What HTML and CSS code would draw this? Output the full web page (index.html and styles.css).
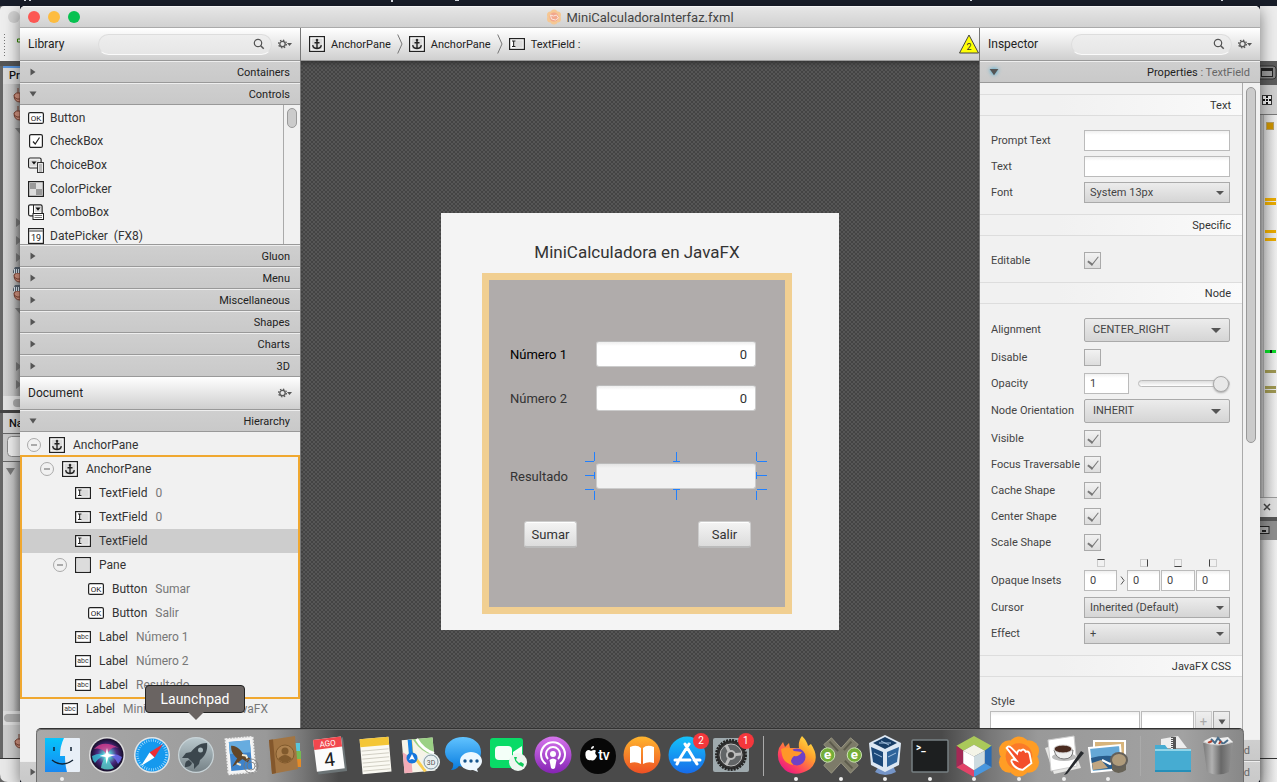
FILE: index.html
```html
<!DOCTYPE html>
<html lang="es">
<head>
<meta charset="utf-8">
<title>MiniCalculadoraInterfaz.fxml</title>
<link rel="stylesheet" href="styles.css">
</head>
<body>
<svg class="defs" aria-hidden="true">
  <symbol id="i-anchor" viewBox="0 0 16 16"><rect x=".6" y=".6" width="14.8" height="14.8" fill="#fff" stroke="#222" stroke-width="1.2"/><rect x="2.5" y="2.5" width="11" height="11" fill="#dcdcdc"/><circle cx="8" cy="4" r="1.3" fill="#333"/><path d="M8 4v8.5M5.5 6.8h5M3.7 9.2c.3 2.2 2 3.3 4.3 3.3s4-1.1 4.3-3.3" fill="none" stroke="#222" stroke-width="1.4"/></symbol>
  <symbol id="i-field" viewBox="0 0 16 16"><rect x=".6" y="2.6" width="14.8" height="10.8" fill="#fff" stroke="#222" stroke-width="1.2"/><rect x="6" y="4.3" width="7.7" height="7.4" fill="#dcdcdc"/><path d="M3 5h3.4M3 10.5h3.4M4.7 5v5.5" stroke="#222" stroke-width="1.2"/></symbol>
  <symbol id="i-pane" viewBox="0 0 16 16"><rect x=".6" y=".6" width="14.8" height="14.8" fill="#fff" stroke="#222" stroke-width="1.2"/><rect x="2" y="2" width="12" height="12" fill="#dcdcdc"/></symbol>
  <symbol id="i-ok" viewBox="0 0 16 16"><rect x=".6" y="2.6" width="14.8" height="10.8" rx="1.5" fill="#fff" stroke="#222" stroke-width="1.2"/><text x="8" y="10.8" text-anchor="middle" font-size="8" fill="#222">OK</text></symbol>
  <symbol id="i-abc" viewBox="0 0 16 16"><rect x=".6" y="2.6" width="14.8" height="10.8" fill="#fff" stroke="#222" stroke-width="1.2"/><text x="8" y="10.3" text-anchor="middle" font-size="7" fill="#333">abc</text></symbol>
  <symbol id="i-check" viewBox="0 0 16 16"><rect x="1.6" y="1.6" width="12.8" height="12.8" rx="1.5" fill="#fff" stroke="#222" stroke-width="1.2"/><path d="M5 8.5l2.2 2.5L11.5 4.5" fill="none" stroke="#222" stroke-width="1.2"/></symbol>
  <symbol id="i-choice" viewBox="0 0 16 16"><rect x=".6" y="1" width="12.5" height="10" rx="1.5" fill="#fff" stroke="#222" stroke-width="1.2"/><rect x="2" y="2.5" width="9.5" height="7" fill="#ddd"/><path d="M3.5 4.5h5L6 7.5z" fill="#111"/><rect x="9.6" y="5.6" width="5.8" height="10" fill="#fff" stroke="#222"/><path d="M11 8h3M11 10h3M11 12h3M11 14h3" stroke="#555" stroke-width=".8"/></symbol>
  <symbol id="i-color" viewBox="0 0 16 16"><rect x=".6" y=".6" width="14.8" height="14.8" fill="#ddd" stroke="#222" stroke-width="1.2"/><path d="M2 2h6v6H2zM8 8h6v6H8z" fill="#999"/></symbol>
  <symbol id="i-combo" viewBox="0 0 16 16"><rect x=".6" y=".8" width="13.5" height="11" rx="1.5" fill="#fff" stroke="#222" stroke-width="1.2"/><path d="M5.5 1v10" stroke="#222"/><rect x="7" y="2" width="6" height="6" fill="#ddd"/><path d="M7.5 3.5h5L10 6.8z" fill="#111"/><rect x="5" y="9.5" width="10.5" height="6" fill="#fff" stroke="#222"/><path d="M6.500 11.5h7.5M6.5 13.5h7.5" stroke="#555" stroke-width=".8"/></symbol>
  <symbol id="i-date" viewBox="0 0 16 16"><rect x=".6" y=".6" width="14.8" height="14.8" fill="#fff" stroke="#222" stroke-width="1.2"/><path d="M1 3h14" stroke="#999" stroke-width="2"/><text x="8" y="12.5" text-anchor="middle" font-size="9" fill="#222">19</text></symbol>
  <symbol id="i-gear" viewBox="0 0 14 10"><circle cx="4.500" cy="5" r="2.7" fill="none" stroke="#555" stroke-width="1.3"/><circle cx="4.500" cy="5" r="3.9" fill="none" stroke="#555" stroke-width="1.2" stroke-dasharray="1.5 1.56"/><path d="M9 4h5l-2.5 3z" fill="#555"/></symbol>
  <symbol id="i-search" viewBox="0 0 12 12"><circle cx="5" cy="5" r="3.7" fill="none" stroke="#555" stroke-width="1.2"/><path d="M7.7 7.7l3 3" stroke="#555" stroke-width="1.5"/></symbol>
  <symbol id="i-chev" viewBox="0 0 6 20"><path d="M.7.500L5 10 .7 19.500" fill="none" stroke="#777"/></symbol>
  <symbol id="i-right" viewBox="0 0 8 8"><path d="M1.500.500L6.500 4 1.500 7.500z" fill="#555"/></symbol>
  <symbol id="i-down" viewBox="0 0 8 8"><path d="M.500 1.500h7L4 6.500z" fill="#555"/></symbol>
</svg>

<div class="desktop">
  <svg class="menubar" viewBox="0 0 1277 6" preserveAspectRatio="none" aria-hidden="true"><path d="M24 0h2v1h-2zM29 0h2v1h-2zM391 0h2v2h-2zM455 0h4v1h-4zM970 0h2v1h-2zM1221 0h2v1h-2z" fill="#dfe3ea"/></svg>

  <svg class="behind behind-left" width="20" height="776" viewBox="0 6 20 776" aria-hidden="true">
    <defs><linearGradient id="lg"><stop offset="0" stop-color="#d3d3d3"/><stop offset=".6" stop-color="#c5c5c5"/><stop offset="1" stop-color="#999"/></linearGradient></defs>
    <rect y="6" width="20" height="776" fill="#666"/>
    <path d="M0 61V10q0-4 4-4h16v55z" fill="#eee"/><circle cx="14" cy="17" r="6" fill="#d2d2d2"/>
    <path d="M4.500 34v22" stroke="#777" stroke-dasharray="1 2"/><path d="M20 39h-2.500v3H20" fill="none" stroke="#318600"/>
    <rect y="61" width="20" height="5" fill="#555"/><rect x="3" y="66" width="17" height="2" fill="#5b96dd"/>
    <rect x="3" y="68" width="17" height="328" fill="url(#lg)"/>
    <rect x="3" y="68" width="17" height="16" fill="#d9d9d9"/>
    <text x="9" y="79" font-size="11" font-weight="500" fill="#111">Pr</text>
    <g id="cups"><path d="M14 95q0 7 6 7v-9q-4-1-6 2z" fill="#d39480" stroke="#784031"/><path d="M14 97q3 3 6 2M18 88v5" stroke="#784031" fill="none"/></g>
    <use href="#cups" y="18"/><use href="#cups" y="180"/><use href="#cups" y="198"/>
    <path d="M13 271l2-4h5v6h-7zM13 289l2-4h5v6h-7z" fill="#56616d"/><path d="M14 271h6M14 289h6" stroke="#dce7f2" stroke-dasharray="1 1" stroke-width="4"/>
    <path d="M15 128h5v6zM15 308h5v6zM16 218l4 3v3l-4 3zM16 236l4 3v3l-4 3zM16 253l4 3v3l-4 3zM16 362l4 3v3l-4 3zM16 380l4 3v3l-4 3z" fill="#777"/>
    <rect x="3" y="396" width="17" height="14" fill="#e3e3e3"/><rect x="13" y="399" width="12" height="8" rx="4" fill="#aaa"/>
    <rect y="410" width="20" height="3" fill="#444"/><rect x="3" y="413" width="17" height="20" fill="#d1d1d1"/>
    <text x="9" y="427" font-size="11" font-weight="500" fill="#111">Na</text>
    <rect x="3" y="433" width="17" height="28" fill="#c9c9c9"/><path d="M3 433.500h17M3 461.500h17" stroke="#666"/><rect x="7.500" y="436.500" width="20" height="20" rx="4" fill="#eee" stroke="#888"/>
    <rect x="3" y="462" width="17" height="252" fill="url(#lg)"/><path d="M6 468h9l-4.500 7z" fill="#777"/>
    <rect x="3" y="711" width="17" height="14" fill="#ddd"/><rect x="4" y="714" width="20" height="8" rx="4" fill="#aaa"/>
    <rect x="3" y="725" width="17" height="33" fill="#ccc"/><use href="#cups" x="1" y="646"/><path d="M0 758.500h20" stroke="#333"/>
    <path d="M0 759h20v23H8q-8 0-8-8z" fill="#e8e8e8"/>
  </svg>
  <svg class="behind behind-right" width="17" height="776" viewBox="0 6 17 776" aria-hidden="true">
    <defs><linearGradient id="rg"><stop offset="0" stop-color="#aaa"/><stop offset=".25" stop-color="#cfcfcf"/><stop offset="1" stop-color="#efefef"/></linearGradient></defs>
    <rect y="6" width="17" height="776" fill="url(#rg)"/><rect y="6" width="17" height="55" fill="#ededed"/>
    <rect y="61" width="17" height="24" fill="#5b5b5b"/><rect x="-3" y="66" width="19" height="13" rx="3" fill="#858585" stroke="#333"/><rect x="1.500" y="68.500" width="11" height="8" fill="#999" stroke="#222"/><path d="M1 70h12" stroke="#222" stroke-width="2"/>
    <rect y="85" width="17" height="30" fill="#cecece"/><path d="M0 114.500h17" stroke="#777"/><rect x="2.500" y="95.500" width="9" height="9" fill="#eee" stroke="#333"/><path d="M3 100h8M7 96v8" stroke="#111" stroke-width="2" stroke-dasharray="2 1"/>
    <rect x="3" y="115" width="1" height="382" fill="#aaa"/><rect x="6.500" y="122.500" width="7" height="7" fill="#c99100" stroke="#b49b60"/>
    <path d="M5 198h11v3H5zM5 202h11v3H5zM5 230h11v3H5zM5 238h11v3H5z" fill="#e6a800"/><path d="M5 350h11v3H5z" fill="#0e1d12"/><path d="M5 350h5v3H5zM12 350h4v3h-4z" fill="#0bd727"/><path d="M5 370h11v3H5zM5 386h11v3H5zM5 390h11v3H5z" fill="#9b9450"/>
    <rect y="497" width="17" height="20" fill="#ddd"/><path d="M0 497.500h17" stroke="#999"/><path d="M4 504l6 6M10 504l-6 6" stroke="#444" stroke-width="1.500"/>
    <rect y="517" width="17" height="4" fill="#555"/><rect y="521" width="17" height="19" fill="#8d8d8d"/><rect x="-2" y="526.500" width="11" height="7" fill="#aaa" stroke="#222"/><path d="M2 531h4" stroke="#222" stroke-width="2"/>
    <path d="M0 758.500h17" stroke="#333"/>
  </svg>

  <main class="window">
    <header class="titlebar">
      <div class="lights"><button class="light red" aria-label="Cerrar"></button><button class="light amber" aria-label="Minimizar"></button><button class="light green" aria-label="Ampliar"></button></div>
      <h1 class="title"><svg width="16" height="16" viewBox="0 0 16 16" aria-hidden="true"><g fill="#f6c793"><circle cx="8" cy="4" r="3.500"/><circle cx="8" cy="12" r="3.500"/><circle cx="4.500" cy="6" r="3.500"/><circle cx="11.500" cy="6" r="3.500"/><circle cx="4.500" cy="10" r="3.500"/><circle cx="11.500" cy="10" r="3.500"/></g><circle cx="8" cy="8" r="4.500" fill="#f2a78c"/><path d="M4.500 6l3 1 3-1 2 3-3 2-4-1z" fill="none" stroke="#fbe6dd"/></svg>MiniCalculadoraInterfaz.fxml</h1>
    </header>
    <div class="columns">
      <section class="side">
        <div class="head"><h2>Library</h2><label class="search"><input type="text" aria-label="Buscar en Library"><svg width="12" height="12"><use href="#i-search"/></svg></label><button class="gear" aria-label="Opciones"><svg width="14" height="10"><use href="#i-gear"/></svg></button></div>
        <button class="bar"><svg width="8" height="8"><use href="#i-right"/></svg><span>Containers</span></button>
        <button class="bar"><svg width="8" height="8"><use href="#i-down"/></svg><span>Controls</span></button>
        <div class="library">
          <ul class="controls">
            <li><svg width="16" height="16"><use href="#i-ok"/></svg>Button</li>
            <li><svg width="16" height="16"><use href="#i-check"/></svg>CheckBox</li>
            <li><svg width="16" height="16"><use href="#i-choice"/></svg>ChoiceBox</li>
            <li><svg width="16" height="16"><use href="#i-color"/></svg>ColorPicker</li>
            <li><svg width="16" height="16"><use href="#i-combo"/></svg>ComboBox</li>
            <li><svg width="16" height="16"><use href="#i-date"/></svg>DatePicker&nbsp; (FX8)</li>
          </ul>
          <div class="scroll"><div class="thumb short"></div></div>
        </div>
        <button class="bar"><svg width="8" height="8"><use href="#i-right"/></svg><span>Gluon</span></button>
        <button class="bar"><svg width="8" height="8"><use href="#i-right"/></svg><span>Menu</span></button>
        <button class="bar"><svg width="8" height="8"><use href="#i-right"/></svg><span>Miscellaneous</span></button>
        <button class="bar"><svg width="8" height="8"><use href="#i-right"/></svg><span>Shapes</span></button>
        <button class="bar"><svg width="8" height="8"><use href="#i-right"/></svg><span>Charts</span></button>
        <button class="bar"><svg width="8" height="8"><use href="#i-right"/></svg><span>3D</span></button>
        <div class="head"><h2>Document</h2><button class="gear" aria-label="Opciones"><svg width="14" height="10"><use href="#i-gear"/></svg></button></div>
        <button class="bar"><svg width="8" height="8"><use href="#i-down"/></svg><span>Hierarchy</span></button>
        <div class="tree">
          <div class="node l0"><button class="fold" aria-label="Contraer"></button><svg width="16" height="16"><use href="#i-anchor"/></svg>AnchorPane</div>
          <div class="group">
            <div class="node l1"><button class="fold" aria-label="Contraer"></button><svg width="16" height="16"><use href="#i-anchor"/></svg>AnchorPane</div>
            <div class="node l2"><svg width="16" height="16"><use href="#i-field"/></svg>TextField<i>0</i></div>
            <div class="node l2"><svg width="16" height="16"><use href="#i-field"/></svg>TextField<i>0</i></div>
            <div class="node l2 selected"><svg width="16" height="16"><use href="#i-field"/></svg>TextField</div>
            <div class="node l2 open"><button class="fold" aria-label="Contraer"></button><svg width="16" height="16"><use href="#i-pane"/></svg>Pane</div>
            <div class="node l3"><svg width="16" height="16"><use href="#i-ok"/></svg>Button<i>Sumar</i></div>
            <div class="node l3"><svg width="16" height="16"><use href="#i-ok"/></svg>Button<i>Salir</i></div>
            <div class="node l2"><svg width="16" height="16"><use href="#i-abc"/></svg>Label<i>Número 1</i></div>
            <div class="node l2"><svg width="16" height="16"><use href="#i-abc"/></svg>Label<i>Número 2</i></div>
            <div class="node l2"><svg width="16" height="16"><use href="#i-abc"/></svg>Label<i>Resultado</i></div>
          </div>
          <div class="node leaf"><svg width="16" height="16"><use href="#i-abc"/></svg>Label<i>MiniCalculadora en JavaFX</i></div>
        </div>
        <button class="bar" aria-label="Controller"><svg width="8" height="8"><use href="#i-right"/></svg></button>
      </section>

      <section class="center">
        <nav class="head crumbs">
          <svg width="16" height="16"><use href="#i-anchor"/></svg><span>AnchorPane</span><svg width="6" height="20"><use href="#i-chev"/></svg>
          <svg width="16" height="16"><use href="#i-anchor"/></svg><span>AnchorPane</span><svg width="6" height="20"><use href="#i-chev"/></svg>
          <svg width="16" height="16"><use href="#i-field"/></svg><span>TextField :</span>
          <svg class="warn" width="20" height="20" viewBox="0 0 20 20"><path d="M10 1L19.500 19H.5z" fill="#ffff05" stroke="#444"/><text x="10" y="16" text-anchor="middle" font-size="9" fill="#333">2</text></svg>
        </nav>
        <div class="canvas">
          <div class="artboard">
            <p class="app-title">MiniCalculadora en JavaFX</p>
            <form class="pane">
              <div class="row"><label class="dark" for="n1">Número 1</label><input id="n1" type="text" value="0"></div>
              <div class="row"><label for="n2">Número 2</label><input id="n2" type="text" value="0"></div>
              <div class="row result"><label for="res">Resultado</label><div class="picked"><input id="res" type="text"><svg width="182" height="48" viewBox="0 0 182 48" aria-hidden="true"><path d="M9.500 0v9M0 9.500h9M9.500 48v-9M0 37.500h9M171.500 0v9M172 9.500h10M171.500 48v-9M172 37.500h10M91.500 0v9M88 9.500h7M91.500 48V38M88 37.500h7M0 23.500h9M9.500 20v7M171.500 20v7M172 23.500h10" fill="none" stroke="#2080ff" shape-rendering="crispEdges"/></svg></div></div>
              <div class="actions"><button type="button">Sumar</button><button type="button">Salir</button></div>
            </form>
          </div>
        </div>
      </section>

      <section class="side inspector">
        <div class="head"><h2>Inspector</h2><label class="search"><input type="text" aria-label="Buscar en Inspector"><svg width="12" height="12"><use href="#i-search"/></svg></label><button class="gear" aria-label="Opciones"><svg width="14" height="10"><use href="#i-gear"/></svg></button></div>
        <button class="bar focus"><svg width="10" height="10"><use href="#i-down"/></svg><span>Properties <em>: TextField</em></span></button>
        <div class="props">
          <div class="list">
            <h3>Text</h3>
            <div class="fields">
              <label for="prompt">Prompt Text</label><input class="box" id="prompt" type="text">
              <label for="text">Text</label><input class="box" id="text" type="text">
              <label for="font">Font</label><div class="pick small"><select id="font"><option>System 13px</option></select></div>
            </div>
            <h3>Specific</h3>
            <div class="fields"><label for="edit">Editable</label><input id="edit" type="checkbox" checked></div>
            <h3>Node</h3>
            <div class="fields">
              <label class="tall" for="align">Alignment</label><div class="pick"><select id="align"><option>CENTER_RIGHT</option></select></div>
              <label for="dis">Disable</label><input id="dis" type="checkbox">
              <label for="opa">Opacity</label><div class="opacity"><input class="box" id="opa" type="text" value="1"><input type="range" aria-label="Opacity" value="100"></div>
              <label class="tall" for="orient">Node Orientation</label><div class="pick"><select id="orient"><option>INHERIT</option></select></div>
              <label for="vis">Visible</label><input id="vis" type="checkbox" checked>
              <label for="foc">Focus Traversable</label><input id="foc" type="checkbox" checked>
              <label for="cache">Cache Shape</label><input id="cache" type="checkbox" checked>
              <label for="cen">Center Shape</label><input id="cen" type="checkbox" checked>
              <label for="sca">Scale Shape</label><input id="sca" type="checkbox" checked>
              <label class="insets-label" for="in1">Opaque Insets</label>
              <div class="insets">
                <span class="edge t"></span><span></span><span class="edge r"></span><span class="edge b"></span><span class="edge l"></span>
                <input class="box" id="in1" type="text" value="0"><svg width="5" height="9" viewBox="0 0 5 9"><path d="M1 .5l3 4-3 4" fill="none" stroke="#555"/></svg><input class="box" type="text" value="0" aria-label="Right"><input class="box" type="text" value="0" aria-label="Bottom"><input class="box" type="text" value="0" aria-label="Left">
              </div>
              <label for="cur">Cursor</label><div class="pick small"><select id="cur"><option>Inherited (Default)</option></select></div>
              <label for="eff">Effect</label><div class="pick small"><select id="eff"><option>+</option></select></div>
            </div>
            <h3>JavaFX CSS</h3>
            <div class="fields style"><label for="sty">Style</label></div>
            <div class="style-row"><input class="box" id="sty" type="text"><input class="box" type="text" aria-label="Valor"><button class="mini" disabled>+</button><button class="mini" aria-label="Más"><svg width="8" height="8"><use href="#i-down"/></svg></button></div>
          </div>
          <div class="scroll"><div class="thumb long"></div></div>
        </div>
        <button class="bar"><svg width="8" height="8"><use href="#i-right"/></svg><span>Layout <em>: TextField</em></span></button>
        <button class="bar"><svg width="8" height="8"><use href="#i-right"/></svg><span>Code <em>: TextField</em></span></button>
      </section>
    </div>
  </main>

  <div class="dock">
    <a class="app run" aria-label="Finder"><svg viewBox="0 0 38 38"><defs><linearGradient id="g1" x2="0" y2="1"><stop stop-color="#06c4fb"/><stop offset="1" stop-color="#1888f2"/></linearGradient></defs><rect x="2" y="2" width="35" height="34" rx="1" fill="#e8eff7"/><path d="M2 2h19q-4 8-4 18h5q0 9 2 16H2z" fill="url(#g1)"/><path d="M11 11v4M28 11v4" stroke="#123" stroke-width="1.500"/><path d="M9 24q10 8 21 0" fill="none" stroke="#123" stroke-width="1.500"/></svg></a>
    <a class="app" aria-label="Siri"><svg viewBox="0 0 38 38"><defs><radialGradient id="g2"><stop stop-color="#fff"/><stop offset=".25" stop-color="#5bc"/><stop offset=".6" stop-color="#4a2a80"/><stop offset="1" stop-color="#150d28"/></radialGradient></defs><circle cx="19" cy="19" r="18" fill="#ddd"/><circle cx="19" cy="19" r="16.500" fill="url(#g2)"/><path d="M6 13Q15 3 31 12q-8-3-12 7-5-8-13-6z" fill="#e0408f" opacity=".75"/><path d="M4 20q8-4 15-1-7 1-12 8-3-3-3-7z" fill="#35cfe0" opacity=".75"/><path d="M34 21q-7-5-15-2 8 1 11 9 3-3 4-7z" fill="#6a6cf0" opacity=".85"/><path d="M13 32q1-8 6-13 2 7 7 13-6 3-13 0z" fill="#59e3d6" opacity=".75"/><path d="M19 12l1.500 6 7 1-7 2-2 7-1-7-6-1 6-2z" fill="#fff"/></svg></a>
    <a class="app" aria-label="Safari"><svg viewBox="0 0 38 38"><circle cx="19" cy="19" r="18" fill="#e4e6e8"/><circle cx="19" cy="19" r="16.500" fill="#1599ee"/><circle cx="19" cy="19" r="14.500" fill="none" stroke="#bce5ff" stroke-width="2.500" stroke-dasharray=".7 1.600"/><path d="M30 8L16.500 16.500l5 5z" fill="#ee2e35"/><path d="M8 30l8.500-13.500 5 5z" fill="#fff"/></svg></a>
    <a class="app" aria-label="Launchpad"><svg viewBox="0 0 38 38"><defs><linearGradient id="g3" x2="0" y2="1"><stop stop-color="#b9c8cd"/><stop offset="1" stop-color="#768287"/></linearGradient></defs><circle cx="19" cy="19" r="18" fill="#c9d4d8"/><circle cx="19" cy="19" r="16.800" fill="url(#g3)"/><path d="M30 7c-8 0-13 5-16 9l-5 1-4 5 6 0 6 6v5l5-5 1-4c5-4 8-9 7-17zM12 24c-4 1-4 4-4 7 4 0 6-1 7-4z" fill="#3b464d"/><circle cx="23.500" cy="14" r="2.500" fill="#a8b7bc"/></svg></a>
    <a class="app" aria-label="Mail"><svg viewBox="0 0 38 38"><g transform="rotate(-5 19 19)"><rect x="5" y="2" width="27" height="35" fill="#f6f6f6" stroke="#eee" stroke-width="2" stroke-dasharray="2 1"/><rect x="8" y="5" width="21" height="29" fill="#3d83cb"/><path d="M8 5h21v12H8z" fill="#67acdf"/><path d="M10 9c6 0 10 6 12 11l6 3-3 4-5-4-7 5-4 2 6-8c-3-3-6-7-5-13z" fill="#624628"/><path d="M14 27l4 2M20 19l4 1 1 3" stroke="#f3ead2" stroke-width="2" fill="none"/></g><circle cx="29" cy="30" r="7" fill="none" stroke="#777" opacity=".8"/><circle cx="29" cy="30" r="4" fill="none" stroke="#777" opacity=".8"/></svg></a>
    <a class="app" aria-label="Contactos"><svg viewBox="0 0 38 38"><path d="M29 7h5v8h-5z" fill="#5ac5db"/><path d="M29 15h6v8h-6z" fill="#76b953"/><path d="M29 23h6v8h-6z" fill="#e48b28"/><path d="M3 4L29 0l3 33L6 38z" fill="#a27543"/><path d="M3 4l4-.500L10 37l-4 1z" fill="#83572c"/><circle cx="19" cy="18" r="9" fill="#ae824f" stroke="#815a2d"/><circle cx="19" cy="15" r="3.500" fill="#815a2d"/><path d="M12 23q7-8 14 0-7 7-14 0z" fill="#815a2d"/></svg></a>
    <a class="app" aria-label="Calendario"><svg viewBox="0 0 38 38"><g transform="rotate(-7 19 19)"><path d="M5 3h29v34H5z" fill="#6c7476"/><rect x="4" y="2" width="28" height="32" fill="#fcfcfc"/><rect x="4" y="2" width="28" height="10" fill="#f2474d"/><text x="18" y="10" text-anchor="middle" font-size="8" fill="#fff">AGO</text><text x="18" y="30" text-anchor="middle" font-size="19" fill="#222">4</text></g></svg></a>
    <a class="app" aria-label="Notas"><svg viewBox="0 0 38 38"><g transform="rotate(-5 19 19)"><rect x="5" y="2" width="29" height="35" fill="#faf9f2"/><rect x="5" y="2" width="29" height="8" fill="#f4c635"/><path d="M6 14h27M6 18h27M6 22h27M6 26h27M6 30h27M6 34h27" stroke="#c8c5b9" stroke-width=".8"/></g></svg></a>
    <a class="app" aria-label="Mapas"><svg viewBox="0 0 38 38"><g transform="rotate(-5 17 19)"><rect x="3" y="3" width="31" height="33" fill="#f6f4e8"/><path d="M3 15l8 6v15H3z" fill="#f3acb7"/><path d="M14 3h20v18Q22 18 14 3z" fill="#9bd185"/><path d="M18 3q5 11 16 16" fill="none" stroke="#fff" stroke-width="3"/><path d="M12 3v14l12 19" fill="none" stroke="#f9ce52" stroke-width="3"/><path d="M11 3v17" stroke="#1686e8" stroke-width="4"/></g><circle cx="12" cy="22" r="5.500" fill="#1676dc"/><path d="M12 18l3 6-3-1-3 1z" fill="#fff"/><circle cx="31" cy="26" r="9" fill="#eaf0f1"/><circle cx="31" cy="26" r="7" fill="none" stroke="#7c929c"/><text x="31" y="29" text-anchor="middle" font-size="7" fill="#555">3D</text></svg></a>
    <a class="app" aria-label="Mensajes"><svg viewBox="0 0 38 38"><defs><linearGradient id="g4" x2="0" y2="1"><stop stop-color="#61c3ff"/><stop offset="1" stop-color="#087cdf"/></linearGradient></defs><path d="M18 1c10 0 18 6 18 15s-8 15-18 15l-4-1q-3 4-8 4 3-3 2-7-8-4-8-11C0 7 8 1 18 1z" fill="url(#g4)"/><path d="M26 16c6 0 11 4 11 9 0 3-2 6-5 8l1 3-5-2c-7 1-13-3-13-9 0-5 5-9 11-9z" fill="#eef8ff"/><circle cx="20" cy="25" r="1.700" fill="#16558e"/><circle cx="26" cy="25" r="1.700" fill="#16558e"/><circle cx="32" cy="25" r="1.700" fill="#16558e"/></svg></a>
    <a class="app" aria-label="FaceTime"><svg viewBox="0 0 38 38"><rect x="1" y="2" width="33" height="30" rx="3" fill="#09db67"/><rect x="6" y="10" width="17" height="14" rx="4" fill="#f4fff8"/><path d="M24 16l9-6v14l-9-5z" fill="#f4fff8"/><circle cx="29" cy="26" r="9" fill="#eef7f0"/><path d="M25 21q1 7 9 10l1-3-3-2-2 1-3-3 1-3z" fill="#0ecb5a"/></svg></a>
    <a class="app" aria-label="Podcasts"><svg viewBox="0 0 38 38"><defs><linearGradient id="g5" x2="0" y2="1"><stop stop-color="#d675ed"/><stop offset="1" stop-color="#8524b4"/></linearGradient></defs><circle cx="19" cy="19" r="18.500" fill="url(#g5)"/><path d="M12 28a12 12 0 1 1 14 0M14 23a7 7 0 1 1 10 0" fill="none" stroke="#fff" stroke-width="2"/><circle cx="19" cy="18" r="3" fill="#fff"/><path d="M15.500 24q3.500-3 7 0l-1.500 8q-2 2-4 0z" fill="#fff"/></svg></a>
    <a class="app" aria-label="TV"><svg viewBox="0 0 38 38"><circle cx="19" cy="20" r="18" fill="#070707"/><path d="M12 13q0-3 3-3 0 3-3 3zM12 15q4-2 5 0-2 2 1 5-3 6-6 4-3 1-5-2-2-7 2-8 2 0 3 1z" fill="#fff"/><text x="25" y="24" text-anchor="middle" font-size="14" font-weight="500" fill="#fff">tv</text></svg></a>
    <a class="app" aria-label="Libros"><svg viewBox="0 0 38 38"><defs><linearGradient id="g6" x2="0" y2="1"><stop stop-color="#ffb52e"/><stop offset="1" stop-color="#ee5024"/></linearGradient></defs><circle cx="19" cy="19" r="18.500" fill="url(#g6)"/><path d="M7 11q7-3 11 1v16q-5-3-11-1zM31 11q-7-3-11 1v16q5-3 11-1z" fill="#fff"/></svg></a>
    <a class="app" aria-label="App Store"><svg viewBox="0 0 38 38"><defs><linearGradient id="g7" x2="0" y2="1"><stop stop-color="#15c2fa"/><stop offset="1" stop-color="#176be9"/></linearGradient></defs><circle cx="19" cy="19" r="18.500" fill="url(#g7)"/><path d="M17 8l12 20M21 8L11 24M7 24h15M26 24h6M9 28l1-2" stroke="#fff" stroke-width="3" stroke-linecap="round"/></svg><b>2</b></a>
    <a class="app" aria-label="Preferencias"><svg viewBox="0 0 38 38"><rect x="1" y="2" width="36" height="34" rx="2" fill="#9faaae"/><circle cx="19" cy="19" r="14.500" fill="#333" stroke="#252525" stroke-width="3" stroke-dasharray="2 1"/><circle cx="19" cy="19" r="11" fill="#626567" stroke="#bbb"/><path d="M19 19l10-1M19 19l-5-10M19 19l-5 10" stroke="#bbb" stroke-width="3"/><circle cx="19" cy="19" r="4" fill="#444" stroke="#bbb" stroke-width="2"/></svg><b>1</b></a>
    <i class="sep"></i>
    <a class="app run" aria-label="Firefox"><svg viewBox="0 0 38 38"><defs><linearGradient id="g8" x1="1" x2=".2" y2="1"><stop stop-color="#fff44f"/><stop offset=".4" stop-color="#ffa22c"/><stop offset=".75" stop-color="#ff425d"/><stop offset="1" stop-color="#e31587"/></linearGradient></defs><path d="M25 0q5 5 6 10l3-2q10 15-1 25Q19 42 8 34-2 25 2 12l4-6 2 5 4-4 1 5 9 0q-1-7 3-12z" fill="url(#g8)"/><circle cx="20" cy="21" r="8.500" fill="#7141c6"/><path d="M4 13q8-4 13 2l8 1q-3 5-8 4-6 5 0 9-10-1-12-10z" fill="#ff9728"/></svg></a>
    <a class="app run" aria-label="eXe"><svg class="wide" viewBox="0 0 44 38"><path d="M4 8l8-7 10 11L32 1l8 7-10 11 10 11-8 8-10-11-10 11-8-8 10-11z" fill="#7d7b69" stroke="#9a9783"/><path d="M10 5l9 10M34 33l-8-8M33 5l-8 9" stroke="#5c5b4c" stroke-width="2"/><circle cx="8" cy="19" r="7.500" fill="#75ae38" stroke="#cfe7b9"/><circle cx="36" cy="19" r="7.500" fill="#75ae38" stroke="#cfe7b9"/><text x="8" y="23.500" text-anchor="middle" font-size="14" font-weight="700" fill="#fff">e</text><text x="36" y="23.500" text-anchor="middle" font-size="14" font-weight="700" fill="#fff">e</text></svg></a>
    <a class="app run" aria-label="VirtualBox"><svg viewBox="0 0 38 38"><path d="M13 30h14l3 6q-11 6-21 0z" fill="#7595c8"/><path d="M3 7L19-1l16 8-2 22-14 7L5 29z" fill="#dce7f3"/><path d="M7 7l12-6 12 6-12 6z" fill="#173d66"/><path d="M5 11l12 5v15L7 26z" fill="#1c497a"/><path d="M33 11l-12 5v15l10-5z" fill="#2f649b"/><path d="M13 7h12M15 5l8 4M8 17l8 4M30 17l-8 4" stroke="#a4c1df"/></svg></a>
    <a class="app run" aria-label="Terminal"><svg viewBox="0 0 38 38"><rect x="1" y="4" width="36" height="32" rx="1" fill="#1d1f20" stroke="#778083" stroke-width="1.500"/><text x="5" y="15" font-size="10" font-weight="700" fill="#fff">&gt;_</text></svg></a>
    <a class="app run" aria-label="NetBeans"><svg class="big" viewBox="0 0 38 42"><path d="M19 0l18 10-7 5-11-6-11 6-7-5z" fill="#aac95a"/><path d="M1 10l7 5v13l-7 4z" fill="#a32955"/><path d="M1 32l7-4 11 7v7z" fill="#e24368"/><path d="M37 10l-7 5v13l7 4z" fill="#286bb4"/><path d="M19 42v-7l11-7 7 4z" fill="#4897df"/><path d="M8 15l11-6 11 6-11 6z" fill="#f4f4e7"/><path d="M8 15l11 6v14L8 28z" fill="#fff"/><path d="M30 15l-11 6v14l11-7z" fill="#cddbe0"/></svg></a>
    <a class="app run" aria-label="Scene Builder"><svg class="big wide" viewBox="0 0 44 42"><g fill="#ff9d25"><circle cx="22" cy="11" r="11"/><circle cx="22" cy="31" r="11"/><circle cx="12" cy="15" r="11"/><circle cx="32" cy="15" r="11"/><circle cx="12" cy="27" r="11"/><circle cx="32" cy="27" r="11"/></g><circle cx="22" cy="21" r="14" fill="#fb7a28"/><path d="M9 12q2-3 5 0l6 6q1-5 4-3 3-3 5 1 3-1 4 2l2 10-9 7q-9-1-12-9 0-3 5-1z" fill="#f34e2b" stroke="#fff" stroke-width="2"/></svg></a>
    <a class="app run" aria-label="Editor"><svg viewBox="0 0 38 38"><path d="M0 12l26-8 10 28-27 6z" fill="#e6e6e4"/><path d="M3 4L29 0l3 30-26 5z" fill="#fff" stroke="#ccc"/><ellipse cx="19" cy="21" rx="12" ry="4" fill="#bbb"/><path d="M9 14h19q0 9-9 9-8 0-10-9z" fill="#eee" stroke="#777"/><ellipse cx="18" cy="13" rx="9" ry="4" fill="#4a2b20" stroke="#ddd"/><path d="M36 15l3 2-17 21-3 1z" fill="#272a2e"/></svg></a>
    <a class="app run" aria-label="Vista Previa"><svg viewBox="0 0 38 38"><path d="M5 5h31v25H5z" fill="#d7b47b" stroke="#fff" stroke-width="2"/><path d="M0 12l31-3 2 24-30 3z" fill="#65a8d6" stroke="#fff" stroke-width="2"/><path d="M2 22q13-4 29-1l1 11-28 2z" fill="#295c8b"/><path d="M3 27l9-3 7 8-15 2z" fill="#c1a681"/><path d="M13 24l8 4 5-4" stroke="#fff" stroke-width="2" fill="none"/><path d="M23 24v10q6 6 14 0V24z" fill="#686357"/><ellipse cx="30" cy="24" rx="8" ry="7" fill="#af9b7b" stroke="#64605a" stroke-width="2"/></svg></a>
    <i class="sep"></i>
    <a class="app" aria-label="Descargas"><svg viewBox="0 0 38 38"><path d="M7 3l17-3 9 12H7z" fill="#eee"/><path d="M17 1h5v14h-5z" fill="#555"/><path d="M18 2v12" stroke="#eee" stroke-dasharray="1 1" stroke-width="2"/><path d="M1 9h10l3 4h23v23H1z" fill="#46acd2"/><path d="M1 14h36" stroke="#91d5e9" stroke-width="2"/><path d="M1 35h36" stroke="#258fb9" stroke-width="2"/></svg></a>
    <a class="app" aria-label="Papelera"><svg viewBox="0 0 38 38"><defs><linearGradient id="g9"><stop stop-color="#777"/><stop offset=".3" stop-color="#b1b1b1"/><stop offset=".6" stop-color="#686868"/><stop offset="1" stop-color="#949494"/></linearGradient></defs><path d="M5 5l8-4 8 1 8-1 5 5-5 5H9z" fill="#eee"/><path d="M12 3l4 4 3-5 5 6 5-4" fill="none" stroke="#476c8a" stroke-width="2"/><path d="M9 7l4-2M20 8l2-3" stroke="#b4422f" stroke-width="2"/><path d="M4 6q15 6 30 0l-4 30q-11 5-22 0z" fill="url(#g9)"/><path d="M4 6q15 6 30 0" fill="none" stroke="#ccc"/></svg></a>
  </div>
  <div class="tip">Launchpad</div>
</div>
</body>
</html>
```

FILE: styles.css
```css
* { box-sizing: border-box; }
body { margin: 0; font: 13px Roboto, "Open Sans", sans-serif; color: #333; }
button, input, select { font: inherit; color: inherit; margin: 0; padding: 0; border: 0; }
svg { flex: none; display: block; }
h1, h2, h3, p, ul { margin: 0; padding: 0; font-weight: 400; }
.defs { position: absolute; width: 0; height: 0; }

.desktop { position: relative; height: 100vh; overflow: hidden; background: #181d29; }
.menubar { width: 100%; height: 6px; }
.behind { position: absolute; top: 6px; }
.behind-left { left: 0; }
.behind-right { right: 0; }

.window { position: absolute; inset: 6px 17px -1px 20px; display: flex; flex-direction: column; border-radius: 5px; overflow: hidden; background: #f1f1f1; box-shadow: 0 4px 16px rgba(0, 0, 0, .5); }
.titlebar { display: flex; align-items: center; height: 22px; padding: 0 8px; background: linear-gradient(#e6e6e6, #d1d1d1); border-bottom: 1px solid #aaa; border-top: 1px solid #f5f5f5; }
.lights { display: flex; gap: 8px; flex: 1; }
.light { width: 12px; height: 12px; border-radius: 50%; }
.red { background: #fc5753; }
.amber { background: #fdbc40; }
.green { background: #07c150; }
.title { display: flex; align-items: center; gap: 4px; font-size: 13px; color: #444; }
.titlebar::after { content: ""; flex: 1; }

.columns { flex: 1; min-height: 0; display: grid; grid-template-columns: 280px minmax(0, 1fr) 280px; }
.side { display: flex; flex-direction: column; min-height: 0; }
.head { display: flex; align-items: center; flex: none; height: 33px; padding: 0 8px; background: linear-gradient(#fff, #cfcfcf); border-bottom: 1px solid #999; }
h2 { font-size: 12px; color: #222; flex: 1; }
.search { display: flex; align-items: center; width: 174px; height: 21px; margin-right: 6px; padding: 0 6px 0 8px; border: 1px solid #ddd; border-bottom-color: #fafafa; border-radius: 11px; background: linear-gradient(#eee, #e6e6e6); }
.inspector .search { width: 161px; }
.search input { flex: 1; min-width: 0; background: none; }
.gear { background: none; }
.bar { display: flex; align-items: center; flex: none; height: 22px; padding: 0 10px 0 9px; font-size: 11px; color: #222; background: linear-gradient(#cfcfcf, #c9c9c9); border-top: 1px solid #eee; border-bottom: 1px solid #999; }
.bar span { flex: 1; text-align: right; }
.bar em { font-style: normal; color: #666; }
.focus svg { filter: drop-shadow(0 0 2px #1da4d8); }

.library { display: flex; align-items: flex-start; height: 140px; flex: none; overflow: hidden; border-bottom: 1px solid #999; }
.controls { flex: 1; display: grid; grid-auto-rows: 1fr; height: 143px; padding-top: 1px; list-style: none; font-size: 12px; color: #333; }
.controls li { display: flex; align-items: center; gap: 6px; padding-left: 8px; }
.scroll { align-self: stretch; width: 17px; flex: none; padding: 3px; border-left: 1px solid #aaa; background: #f1f1f1; }
.thumb { width: 10px; border: 1px solid #999; border-radius: 5px; background: #cbcbcb; }
.short { height: 20px; }
.long { height: 356px; margin-top: 1px; }

.tree { flex: 1; min-height: 0; overflow: hidden; padding-top: 1px; font-size: 12px; }
.node { display: flex; align-items: center; gap: 8px; height: 24px; }
.node i { font-style: normal; color: #777; }
.group { margin: -2px 0; border: 2px solid #f0a830; }
.fold { position: relative; width: 14px; height: 14px; border: 1px solid #aaa; border-radius: 50%; background: none; }
.fold::after { content: ""; position: absolute; left: 3px; right: 3px; top: 5px; height: 2px; background: #aaa; }
.l0 { padding-left: 7px; }
.l1 { padding-left: 18px; }
.l2 { padding-left: 53px; }
.l2.open { padding-left: 31px; }
.l3 { padding-left: 66px; }
.leaf { padding-left: 42px; }
.selected { background: #cdcdcd; }

.center { display: flex; flex-direction: column; min-width: 0; border: solid #777; border-width: 0 1px; }
.crumbs { font-size: 11px; gap: 6px; padding-right: 0; color: #222; }
.warn { margin-left: auto; }
.canvas { flex: 1; display: flex; justify-content: center; align-items: flex-start; padding-top: 152px; background: conic-gradient(#444 25%, #565656 0 50%, #444 0 75%, #565656 0) 0 0 / 4px 4px; box-shadow: inset 0 4px 4px -2px #333; }
.artboard { width: 398px; height: 417px; padding: 28px 47px 16px 41px; background: #f4f4f4; }
.app-title { font-size: 17px; line-height: 22px; text-align: center; margin-bottom: 10px; }
.pane { height: 341px; border: 7px solid #f1cf91; background: #b0acab; padding: 61px 29px 0 21px; }
.row { display: grid; grid-template-columns: 1fr 160px; align-items: center; margin-bottom: 18px; }
.row input { width: 100%; height: 26px; padding: 0 8px; text-align: right; border: 1px solid #ccc; border-top-color: #bbb; border-radius: 3px; background: linear-gradient(#eee, #fff 4px); }
.row .dark { color: #000; }
.row.result { margin: 52px 0 32px; }
.picked { position: relative; }
.picked input { display: block; background: linear-gradient(#e4e4e4, #f2f2f2 4px); }
.picked svg { position: absolute; left: -11px; top: -11px; }
.actions { display: flex; justify-content: space-between; padding: 0 5px 0 14px; }
.actions button { width: 53px; height: 27px; border: 1px solid #ccc; border-bottom: 2px solid #bbb; border-radius: 3px; background: linear-gradient(#f4f4f4, #dcdcdc); box-shadow: inset 0 1px #fff; }

.props { flex: 1; min-height: 0; overflow: hidden; display: flex; }
.inspector .scroll { width: 18px; }
.list { flex: 1; padding-top: 11px; }
h3 { height: 22px; line-height: 21px; padding-right: 11px; text-align: right; font-size: 11px; border: solid #ddd; border-width: 1px 0; background: linear-gradient(90deg, #f1f1f1 30%, #fafafa); }
.fields { display: grid; grid-template-columns: 93px 146px; grid-auto-rows: minmax(26px, auto); align-items: center; padding: 11px 11px 9px; font-size: 11px; color: #444; }
.fields label { white-space: nowrap; }
.fields .tall { height: 29px; line-height: 29px; }
.box { height: 21px; min-width: 0; padding: 0 5px; border: 1px solid #bbb; background: linear-gradient(#f0f0f0, #fff 4px); }
.pick { position: relative; height: 24px; border: 1px solid #aaa; border-radius: 2px; background: linear-gradient(#ececec, #d5d5d5); }
.pick select { appearance: none; width: 100%; height: 100%; padding-left: 8px; background: none; }
.pick::after { content: ""; position: absolute; right: 8px; top: 9px; border: 5px solid transparent; border-top-color: #555; border-bottom: 0; pointer-events: none; }
.small { height: 21px; border-radius: 0; }
.small select { padding-left: 5px; }
.small::after { right: 5px; top: 8px; border-width: 4px 4px 0; }
input[type="checkbox"] { appearance: none; display: grid; place-items: center; width: 17px; height: 17px; border: 1px solid #aaa; background: linear-gradient(#f2f2f2, #ddd); }
input[type="checkbox"]:checked::after { content: ""; width: 5px; height: 9px; border: solid #777; border-width: 0 2px 2px 0; border-right-width: 1px; transform: translateY(-1px) rotate(38deg); }
.opacity { display: flex; align-items: center; gap: 9px; }
.opacity .box { width: 45px; }
.opacity [type="range"] { appearance: none; flex: 1; min-width: 0; height: 18px; background: none; }
[type="range"]::-webkit-slider-runnable-track { height: 7px; border: 1px solid #bbb; border-radius: 4px; background: linear-gradient(#ddd, #fff); }
[type="range"]::-webkit-slider-thumb { appearance: none; width: 16px; height: 16px; margin-top: -5px; border: 1px solid #aaa; border-radius: 50%; background: #e8e8e8; box-shadow: 0 1px 2px #aaa; }
.fields .insets-label { align-self: end; height: 24px; line-height: 22px; }
.insets { display: grid; grid-template-columns: 33px 8px 33px 34px 34px; column-gap: 1px; row-gap: 3px; justify-items: center; align-items: center; height: 39px; padding-top: 4px; align-content: start; }
.insets .box { width: 100%; }
.edge { width: 8px; height: 8px; border: 1px solid #ccc; }
.t { border-top-color: #444; }
.r { border-right-color: #444; }
.b { border-bottom-color: #444; }
.l { border-left-color: #444; }
.fields.style { padding-bottom: 0; margin-bottom: -3px; }
.style-row { display: grid; grid-template-columns: 1fr 53px 17px 17px; gap: 1px; padding: 0 12px 0 10px; }
.mini { display: grid; place-items: center; height: 21px; border: 1px solid #aaa; background: linear-gradient(#eee, #ddd); }
.mini:disabled { color: #aaa; border-color: #ccc; }

.dock { position: absolute; left: 36px; right: 33px; bottom: 0; display: flex; height: 53px; padding: 6px 3px 0; border: 1px solid #6d6d6d; border-width: 1px 1px 0; border-radius: 5px 5px 0 0; background: linear-gradient(90deg, #a9a9a9, #999 19%, #777 22%, #4a4a4a 25%, #4a4a4a 75%, #777 79%, #999 83%, #a2a2a2 95%, #888); box-shadow: 0 -1px #333; }
.app { position: relative; flex: 1; display: flex; flex-direction: column; align-items: center; }
.app > svg { width: 38px; height: 38px; overflow: visible; }
.app > .wide { width: 42px; }
.app > .big { height: 41px; }
.run::after { content: ""; position: absolute; bottom: 1px; width: 4px; height: 4px; border-radius: 50%; background: #eee; }
.app b { position: absolute; right: 0; top: -3px; width: 16px; height: 16px; border-radius: 50%; background: #f5373c; color: #fff; font-size: 10px; line-height: 16px; font-weight: 400; text-align: center; }
.sep { width: 20px; height: 40px; background: linear-gradient(#aaa, #aaa) 50% 0 / 1px 100% no-repeat; }
.tip { position: absolute; left: 145px; bottom: 69px; width: 100px; height: 28px; line-height: 26px; text-align: center; font-size: 14px; color: #fff; background: #6a6462; border: 1px solid #222; border-radius: 4px; }
.tip::after { content: ""; position: absolute; left: 42px; top: 26px; border: 8px solid transparent; border-top-color: #6a6462; border-bottom: 0; }
```
